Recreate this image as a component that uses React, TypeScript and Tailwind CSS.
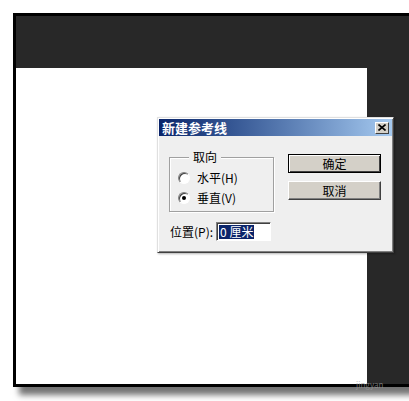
import React from "react";

const font = { fontFamily: '"Noto Sans CJK SC", "Noto Sans", sans-serif' };

function Radio({ checked, label }: { checked?: boolean; label: string }) {
  return (
    <div className="flex items-center h-[20px] pl-[8px]">
      <div className="relative w-[12px] h-[12px] rounded-full bg-white border border-t-[#808080] border-l-[#808080] border-r-white border-b-white shadow-[inset_1px_1px_0_#404040]">
        {checked && (
          <div className="absolute left-[3px] top-[3px] w-[4px] h-[4px] rounded-full bg-black" />
        )}
      </div>
      <span className="ml-[7px] text-[12px] leading-[14px] text-black">{label}</span>
    </div>
  );
}

function Button({ label, isDefault }: { label: string; isDefault?: boolean }) {
  return (
    <div
      className={`w-[93px] h-[19px] bg-[#d4d0c8] flex items-center justify-center text-[12px] leading-[14px] text-black ${
        isDefault
          ? "border border-black shadow-[inset_1px_1px_0_white,inset_-1px_-1px_0_#404040]"
          : "border border-t-white border-l-white border-r-[#404040] border-b-[#404040] shadow-[inset_-1px_-1px_0_#808080]"
      }`}
    >
      {label}
    </div>
  );
}

export default function App() {
  return (
    <div className="relative w-[409px] h-[401px] bg-white overflow-hidden" style={font}>
      <div className="ml-[13px] mt-[13px] w-[400px] border-l-[3px] border-t-[3px] border-b-[3px] border-black bg-[#282828] pt-[52px] shadow-[6px_8px_6px_rgba(0,0,0,0.55)]">
        <div className="w-[351px] h-[316px] bg-white" />
      </div>

      <div className="absolute left-[356px] top-[381px] text-[8px] leading-[8px] text-[#9a9a9a] opacity-70">jingyan</div>

      {/* Dialog window */}
      <div className="absolute left-[157px] top-[117px] w-[237px] h-[136px] bg-[#efefef] border border-t-[#e0e0e0] border-l-[#e0e0e0] border-r-[#404040] border-b-[#404040] shadow-[inset_1px_1px_0_white,inset_-1px_-1px_0_#808080,1px_1px_2px_rgba(0,0,0,0.3)] p-[1px]">
        <div className="h-[17px] flex items-center justify-between bg-gradient-to-r from-[#0a246a] to-[#a6caf0] pl-[3px] pr-[3px]">
          <span className="text-[13px] leading-[15px] font-bold text-white">新建参考线</span>
          <div className="w-[14px] h-[12px] bg-[#d4d0c8] border border-t-white border-l-white border-r-[#404040] border-b-[#404040] flex items-center justify-center">
            <svg width="8" height="7" viewBox="0 0 8 7">
              <path d="M0.5 0.5 L7.5 6.5 M7.5 0.5 L0.5 6.5" stroke="black" strokeWidth="1.6" />
            </svg>
          </div>
        </div>

        <div className="flex pl-[10px]">
          <div className="w-[105px]">
            <div className="mt-[21px] h-[55px] border border-[#a0a0a0] shadow-[inset_1px_1px_0_white,1px_1px_0_white]">
              <div className="-mt-[8px] ml-[19px] w-fit bg-[#efefef] px-[4px] text-[12px] leading-[14px] text-black">
                取向
              </div>
              <div className="mt-[4px]">
                <Radio label="水平(H)" />
                <Radio checked label="垂直(V)" />
              </div>
            </div>
            <div className="mt-[10px] flex items-center">
              <span className="ml-[1px] text-[12px] leading-[14px] text-black">位置(P):</span>
              <div className="ml-[3px] w-[55px] h-[19px] bg-white border border-t-[#808080] border-l-[#808080] border-r-white border-b-white shadow-[inset_1px_1px_0_#404040] flex items-center pl-[2px]">
                <span className="bg-[#0a246a] text-white text-[12px] leading-[14px] px-[1px]">0 厘米</span>
              </div>
            </div>
          </div>
          <div className="ml-[14px] mt-[18px] flex flex-col gap-[8px]">
            <Button label="确定" isDefault />
            <Button label="取消" />
          </div>
        </div>
      </div>
    </div>
  );
}
